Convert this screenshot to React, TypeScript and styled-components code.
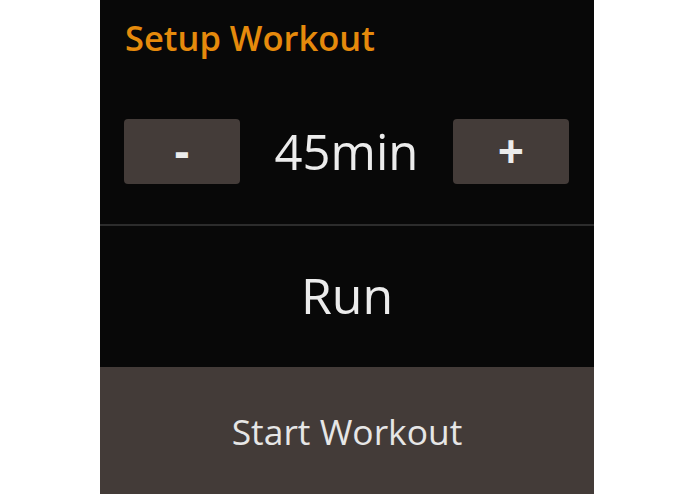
import React from "react";
import styled, { createGlobalStyle } from "styled-components";

const Global = createGlobalStyle`
  html, body { margin: 0; padding: 0; background: #ffffff; }
  body { font-family: "Open Sans", "Noto Sans", sans-serif; }
`;

const Panel = styled.div`
  width: 494px;
  height: 494px;
  margin-left: 100px;
  background: #080808;
  display: flex;
  flex-direction: column;
`;

const Title = styled.h1`
  margin: 0;
  padding: 14px 25px 0;
  font-size: 34.5px;
  line-height: 48px;
  font-weight: 600;
  color: #e58a0c;
`;

const Stepper = styled.div`
  display: flex;
  align-items: center;
  justify-content: space-between;
  padding: 0 25px 0 24px;
  margin-top: 57px;
  height: 65px;
`;

const StepButton = styled.button`
  width: 116px;
  height: 65px;
  border: none;
  border-radius: 4px;
  background: #443c39;
  color: #ececec;
  font-family: inherit;
  font-size: 46px;
  font-weight: 700;
  line-height: 1;
  padding: 0 0 4px;
  display: flex;
  align-items: center;
  justify-content: center;
`;

const Value = styled.div`
  font-size: 49px;
  color: #ececec;
  line-height: 65px;
`;

const Divider = styled.div`
  margin-top: 40px;
  height: 2px;
  background: #2c2c2c;
`;

const Activity = styled.div`
  flex: 1;
  display: flex;
  align-items: center;
  justify-content: center;
  font-size: 50px;
  color: #ececec;
  padding-bottom: 3px;
`;

const StartButton = styled.button`
  height: 127px;
  border: none;
  background: #433b38;
  color: #e6e6e6;
  font-family: inherit;
  font-size: 35.4px;
  padding: 0;
  display: flex;
  align-items: center;
  justify-content: center;
`;

export default function App() {
  return (
    <>
      <Global />
      <Panel>
        <Title>Setup Workout</Title>
        <Stepper>
          <StepButton>-</StepButton>
          <Value>45min</Value>
          <StepButton>+</StepButton>
        </Stepper>
        <Divider />
        <Activity>Run</Activity>
        <StartButton>Start Workout</StartButton>
      </Panel>
    </>
  );
}
